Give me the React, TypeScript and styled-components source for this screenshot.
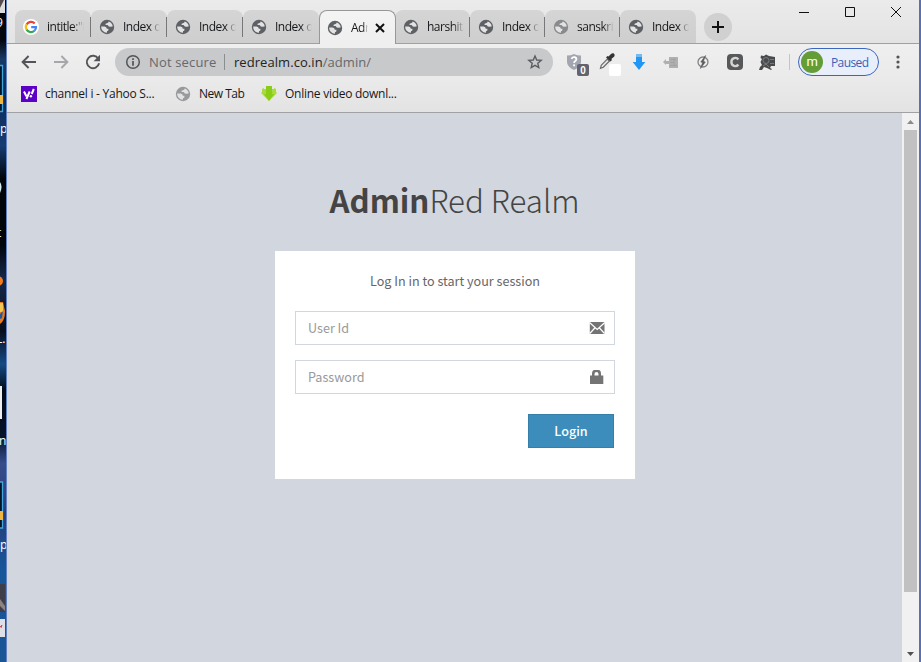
import React from 'react';
import styled, { createGlobalStyle } from 'styled-components';

const GlobalStyle = createGlobalStyle`
  * { box-sizing: border-box; }
  html, body { margin: 0; padding: 0; }
  body { overflow: hidden; font-family: "Open Sans", "Noto Sans", sans-serif; }
`;

const Screen = styled.div`
  display: flex;
  width: 921px;
  height: 662px;
  overflow: hidden;
  background: #0b2245;
`;

const Desktop = styled.aside`
  width: 6px;
  height: 662px;
  flex: none;
  overflow: hidden;
  svg { display: block; }
`;

const Window = styled.main`
  flex: 1;
  min-width: 0;
  display: flex;
  flex-direction: column;
  border-left: 1px solid #5f7fc0;
  border-right: 2px solid #5c6fae;
  background: #e5e5e5;
`;

const TitleBar = styled.header`
  display: flex;
  height: 44px;
  padding-left: 8px;
  background: linear-gradient(#ebebeb, #e3e3e3);
  box-shadow: inset 0 -1px #a0a0a2;
`;

const TabStrip = styled.nav`
  display: flex;
  margin-top: 10px;
  height: 34px;
  width: 681px;
`;

const Tab = styled.div<{ $active?: boolean; $narrow?: boolean; $divided?: boolean }>`
  display: flex;
  align-items: center;
  flex: none;
  width: ${p => (p.$active ? 77 : p.$narrow ? 75 : 76)}px;
  height: ${p => (p.$active ? 34 : 33)}px;
  margin-right: ${p => (p.$active ? -1 : 0)}px;
  padding-left: ${p => (p.$active ? 7 : 8)}px;
  border: ${p => (p.$active ? '1px solid #98989b' : '0')};
  border-bottom: 0;
  border-radius: 8px 8px 0 0;
  background: ${p => (p.$active ? 'linear-gradient(#f4f4f4, #efefef)' : 'linear-gradient(#d5d5d5, #cecece)')};
  z-index: ${p => (p.$active ? 1 : 0)};
  &::after {
    content: '';
    width: 1px;
    height: 20px;
    margin-left: auto;
    background: ${p => (p.$divided ? '#77777a' : 'transparent')};
  }
  svg { flex: none; }
`;

const TabTitle = styled.span<{ $short?: boolean }>`
  width: ${p => (p.$short ? 17 : 37)}px;
  margin-left: 8px;
  overflow: hidden;
  white-space: nowrap;
  font-size: 12px;
  line-height: 18px;
  letter-spacing: -0.5px;
  color: #17181a;
  mask-image: linear-gradient(90deg, #000 70%, transparent);
`;

const CloseMark = styled.svg`
  margin-left: 7px;
`;

const NewTab = styled.button`
  display: grid;
  place-items: center;
  width: 28px;
  height: 28px;
  margin: 13px 0 0 8px;
  padding: 0;
  border: 0;
  border-radius: 50%;
  background: #d0d0d0;
`;

const WindowControls = styled.div`
  display: grid;
  grid-template-columns: repeat(3, 46px);
  height: 24px;
  margin-left: auto;
  place-items: center;
`;

const Toolbar = styled.div`
  display: flex;
  align-items: center;
  height: 36px;
  padding-left: 6px;
  background: linear-gradient(#efefef, #eaeaea);
`;

const Slot = styled.div`
  display: grid;
  place-items: center;
  width: 32px;
  height: 32px;
  flex: none;
  svg { overflow: visible; }
`;

const MenuSlot = styled(Slot)`
  margin-left: 3px;
`;

const AddressBar = styled.div`
  display: flex;
  align-items: center;
  width: 438px;
  height: 28px;
  margin: 0 6px;
  padding: 0 10px;
  border-radius: 14px;
  background: #c8c9cb;
  font-size: 13px;
  line-height: 20px;
  color: #66686c;
  white-space: nowrap;
`;

const Security = styled.span`
  width: 75px;
  margin-left: 8px;
  letter-spacing: 0.15px;
`;

const AddressDivider = styled.i`
  width: 1px;
  height: 16px;
  margin-right: 9px;
  background: #8c8d90;
`;

const Address = styled.span`
  letter-spacing: 0.06px;
  b { font-weight: 400; color: #222326; }
`;

const StarIcon = styled.svg`
  margin-left: auto;
`;

const ToolbarDivider = styled.i`
  width: 1px;
  height: 16px;
  margin: 0 8px 0 6px;
  background: #bfc5d2;
`;

const Profile = styled.div`
  display: flex;
  align-items: center;
  width: 81px;
  height: 28px;
  padding-left: 2px;
  border: 1px solid #3a66bd;
  border-radius: 14px;
  background: #e9effa;
  color: #3561ba;
  font-size: 12px;
  letter-spacing: -0.6px;
`;

const Avatar = styled.span`
  display: grid;
  place-items: center;
  width: 22px;
  height: 22px;
  margin-right: 8px;
  border-radius: 50%;
  background: #649d35;
  color: #fff;
  font: 13px/20px Roboto, sans-serif;
`;

const Bookmarks = styled.div`
  display: flex;
  align-items: center;
  height: 33px;
  padding: 0 0 5px 14px;
  background: linear-gradient(#eaeaea, #e3e3e3);
  border-bottom: 1px solid #a0a1a5;
`;

const Bookmark = styled.div<{ $width: number; $spacing: number }>`
  display: flex;
  align-items: center;
  width: ${p => p.$width}px;
  gap: 8px;
  font-size: 12px;
  line-height: 18px;
  letter-spacing: ${p => p.$spacing}px;
  white-space: nowrap;
  color: #17181a;
`;

const Viewport = styled.div`
  display: flex;
  flex: 1;
  background: #d2d6de;
`;

const Page = styled.section`
  flex: 1;
  padding: 62px 0 0 268px;
  font-family: "Noto Sans CJK SC", sans-serif;
`;

const Brand = styled.h1`
  width: 359px;
  height: 50px;
  margin: 0 0 26px;
  text-align: center;
  font-size: 31.3px;
  line-height: 50px;
  font-weight: 300;
  white-space: nowrap;
  color: #444;
  b { font-weight: 700; }
`;

const LoginBox = styled.form`
  display: flex;
  flex-direction: column;
  width: 360px;
  height: 228px;
  padding: 20px;
  background: #fff;
`;

const Message = styled.p`
  height: 20px;
  margin: 0 0 20px;
  text-align: center;
  font-size: 12.6px;
  line-height: 20px;
  color: #666;
`;

const Field = styled.label`
  display: flex;
  align-items: center;
  height: 34px;
  margin-bottom: 15px;
  padding: 0 9px 0 12px;
  border: 1px solid #d2d6de;
`;

const Input = styled.input`
  flex: 1;
  min-width: 0;
  height: 20px;
  padding: 0;
  border: 0;
  outline: 0;
  font: 12.6px/20px "Noto Sans CJK SC", sans-serif;
  &::placeholder { color: #999; opacity: 1; }
`;

const LoginButton = styled.button`
  align-self: flex-end;
  width: 86px;
  height: 34px;
  margin: 5px 1px 0 0;
  padding: 0;
  border: 1px solid #367fa9;
  background: #3c8dbc;
  color: #fff;
  font: 500 12.6px/20px "Noto Sans CJK SC", sans-serif;
`;

const ScrollTrack = styled.div`
  display: flex;
  flex-direction: column;
  align-items: center;
  justify-content: space-between;
  width: 17px;
  background: #f1f1f1;
`;

const ScrollThumb = styled.div`
  width: 13px;
  height: 462px;
  margin-bottom: auto;
  background: #c1c1c1;
`;

const Arrow = styled.svg`
  display: block;
  flex: none;
`;

const Globe = ({ color = '#5d6064' }: { color?: string }) => (
  <svg width="16" height="16" viewBox="0 0 16 16">
    <circle cx="8" cy="8" r="7.2" fill={color} />
    <path d="M2.2 7.6H5.600Q7.800 7.800 7.800 9.800H9.400V11.300Q9.300 12 8 12.200V13.700C4.600 13.700 2 11 2.200 7.600Z" fill="#e2e2e2" />
    <path d="M9.700 2.400Q9.500 3.900 7.800 4.200 6.200 4.500 6.400 5.700 7.300 6.200 8.600 6.100 9.400 7.900 11 7.800L13.700 7.500C13.600 5 12.100 3.100 9.700 2.400Z" fill="#e2e2e2" />
  </svg>
);

const Google = () => (
  <svg width="16" height="16" viewBox="0 0 16 16">
    <circle cx="8" cy="8" r="8" fill="#fff" />
    <g fill="none" strokeWidth="2.2">
      <path d="M11.7 4.4A5.1 5.1 0 0 0 3.6 5.5" stroke="#ea4335" />
      <path d="M3.6 5.4A5.1 5.1 0 0 0 3.6 10.7" stroke="#fbbc05" />
      <path d="M3.6 10.6a5.1 5.1 0 0 0 7.8 1.2" stroke="#34a853" />
      <path d="M11.4 11.8c1.1-1 1.7-2.1 1.6-3.7H8.2" stroke="#4285f4" />
    </g>
  </svg>
);

const Back = ({ color, flip }: { color: string; flip?: boolean }) => (
  <svg width="16" height="16" viewBox="0 0 16 16" fill="none" stroke={color} strokeWidth="1.9">
    <path d={flip ? 'M1 8h13M8.4 2 14.4 8 8.4 14' : 'M15 8H2M7.6 2 1.6 8 7.6 14'} />
  </svg>
);

const tabs = [
  { title: 'intitle:"index', google: true, divided: true },
  { title: 'Index of /', divided: true },
  { title: 'Index of /', divided: true },
  { title: 'Index of /' },
  { title: 'Admin', active: true },
  { title: 'harshita', divided: true, narrow: true },
  { title: 'Index of /', divided: true, narrow: true },
  { title: 'sanskriti', divided: true, narrow: true, pale: true },
  { title: 'Index of /' },
];

const DesktopArt = () => (
  <svg width="6" height="662" viewBox="0 0 6 662">
    <defs>
      <linearGradient id="sky" x1="0" y1="0" x2="0" y2="1">
        <stop offset="0" stopColor="#03060c" />
        <stop offset=".06" stopColor="#03060c" />
        <stop offset=".09" stopColor="#183b66" />
        <stop offset=".15" stopColor="#0d2c5c" />
        <stop offset=".22" stopColor="#173c72" />
        <stop offset=".27" stopColor="#02050a" />
        <stop offset=".37" stopColor="#02050a" />
        <stop offset=".42" stopColor="#162849" />
        <stop offset=".5" stopColor="#080f1c" />
        <stop offset=".55" stopColor="#164a84" />
        <stop offset=".59" stopColor="#030b18" />
        <stop offset=".66" stopColor="#07152a" />
        <stop offset=".7" stopColor="#374d8b" />
        <stop offset=".78" stopColor="#263f7a" />
        <stop offset=".86" stopColor="#17569a" />
        <stop offset="1" stopColor="#1a5595" />
      </linearGradient>
    </defs>
    <rect width="6" height="662" fill="url(#sky)" />
    <path d="M0 0h5v13H0Z" fill="#ddd" />
    <path d="M0 0h4L0 8Z" fill="#554d50" />
    <g fill="#071426" stroke="#43a5db" strokeWidth="1.3">
      <path d="M-1 65.5h3.5v46H-1M-1 482h3.5v46H-1" />
    </g>
    <path d="M0 95h3v9H0ZM0 511h3v9H0Z" fill="#efb642" />
    <path d="M0 182q3 4 0 11Z" fill="#d4edf4" />
    <circle cx="-2" cy="281" r="5" fill="#f07b21" />
    <path d="M0 302h3l2 9q0 10-5 13Z" fill="#e87921" />
    <path d="M0 303h3v9H0Z" fill="#f2c655" />
    <path d="M0 314l3-3-1 7-2 1Z" fill="#235a91" />
    <path d="M0 386h2v33H0Z" fill="#eee" />
    <path d="M0 584h5v28H0Z" fill="#3d3e4a" />
    <path d="M0 599l5 7v5l-5-5Z" fill="#8d827d" />
    <path d="M0 619h5v18H0Z" fill="#dedfe7" />
    <path d="M0 627l2-2-1 3" fill="none" stroke="#c45158" />
    <g fill="#fff" fontFamily="Open Sans, sans-serif" fontSize="12">
      <text x="-4" y="27">9</text>
      <text x="0" y="133">p</text>
      <text x="-3" y="237">t</text>
      <text x="-4" y="343">L.</text>
      <text x="-1" y="445">n</text>
      <text x="0" y="549">p</text>
    </g>
  </svg>
);

export default function App() {
  return (
    <Screen>
      <GlobalStyle />
      <Desktop><DesktopArt /></Desktop>
      <Window>
        <TitleBar>
          <TabStrip>
            {tabs.map((t, i) => (
              <Tab key={i} $active={t.active} $narrow={t.narrow} $divided={t.divided}>
                {t.google ? <Google /> : <Globe color={t.pale ? '#898a8d' : undefined} />}
                <TabTitle $short={t.active}>{t.title}</TabTitle>
                {t.active && (
                  <CloseMark width="10" height="10" viewBox="0 0 10 10" stroke="#111" strokeWidth="2">
                    <path d="m1 1 8 8M9 1 1 9" />
                  </CloseMark>
                )}
              </Tab>
            ))}
          </TabStrip>
          <NewTab aria-label="New tab">
            <svg width="12" height="12" viewBox="0 0 12 12" stroke="#111" strokeWidth="2"><path d="M6 0v12M0 6h12" /></svg>
          </NewTab>
          <WindowControls>
            <svg width="12" height="12" stroke="#111"><path d="M1 6.5h10" /></svg>
            <svg width="12" height="12" fill="none" stroke="#111"><path d="M1.5 1.5h9v9h-9Z" /></svg>
            <svg width="12" height="12" stroke="#111"><path d="m1 1 10 10M11 1 1 11" /></svg>
          </WindowControls>
        </TitleBar>

        <Toolbar>
          <Slot><Back color="#525458" /></Slot>
          <Slot><Back color="#a6a7aa" flip /></Slot>
          <Slot>
            <svg width="16" height="16" viewBox="0 0 16 16">
              <path d="M13.3 4.7A6.2 6.2 0 1 0 14.1 9.3" fill="none" stroke="#525458" strokeWidth="1.9" />
              <path d="M15 .8v6.4H8.6Z" fill="#525458" />
            </svg>
          </Slot>
          <AddressBar>
            <svg width="16" height="16" viewBox="0 0 16 16" fill="none" stroke="#525458" strokeWidth="1.5">
              <circle cx="8" cy="8" r="6.3" /><path d="M8 7v4.7M8 4.3V6" strokeWidth="1.7" />
            </svg>
            <Security>Not secure</Security>
            <AddressDivider />
            <Address><b>redrealm.co.in</b>/admin/</Address>
            <StarIcon width="16" height="16" viewBox="0 0 16 16" fill="none" stroke="#5b5d61" strokeWidth="1.4">
              <path d="m8 2 1.7 4 4.5.4-3.4 2.9 1 4.3L8 11.3l-3.8 2.3 1-4.3-3.4-2.9L6.3 6Z" />
            </StarIcon>
          </AddressBar>
          <Slot>
            <svg width="24" height="24" viewBox="0 0 24 24">
              <path d="M4 5.5q4 0 7-1.5 3 1.5 7 1.5v6c0 4-3 6.500-7 8.500-4-2-7-4.500-7-8.500Z" fill="#a3a6b1" />
              <path d="M8.600 9c.6-3 5-2.200 4.800.300-.1 1.800-2.300 1.600-2.300 3.600" fill="none" stroke="#fff" strokeWidth="1.8" />
              <circle cx="11.1" cy="15.3" r="1.1" fill="#fff" />
              <rect x="14" y="14" width="12" height="12" rx="2" fill="#62636f" />
              <text x="17.2" y="23.6" fontFamily="Liberation Sans, sans-serif" fontSize="10" fontWeight="700" fill="#fff">0</text>
            </svg>
          </Slot>
          <Slot>
            <svg width="26" height="26" viewBox="0 0 26 26">
              <path d="m6.500 19.200.8-3 6-6 2 2-6 6Z" fill="#e5e5e5" stroke="#68696b" strokeWidth="1.2" />
              <path d="m12 8.500 1.500-1.500 1 .5 2.500-2.500c2.200-2.200 4.900.4 3 2.700l-2.700 2.300.7 1L16.400 12.500Z" fill="#343436" />
              <rect x="15" y="15" width="12" height="12" rx="2" fill="#fff" />
            </svg>
          </Slot>
          <Slot>
            <svg width="16" height="18" viewBox="0 0 16 18">
              <path d="M5 4h6v5h3.300L8 17 1.700 9H5Z" fill="#2196f3" /><path d="M5 1h6v3H5Z" fill="#72bbf1" />
            </svg>
          </Slot>
          <Slot>
            <svg width="16" height="16" viewBox="0 0 16 16" fill="#b0b0b0">
              <path d="M6 3h9v11H6v-4H3v1L0 8l3-3v2h3Z" /><path d="M7 5.500h6M7 8.500h4M7 11.500h7M11 4v8" stroke="#a2a2a2" />
            </svg>
          </Slot>
          <Slot>
            <svg width="14" height="14" viewBox="0 0 14 14">
              <circle cx="7" cy="7" r="5" fill="none" stroke="#818285" strokeWidth="1.3" />
              <path d="M9.600.5 4.800 7l1.900.5L4.400 13.500 9.300 7l-2-.500Z" fill="#56585a" stroke="#56585a" strokeWidth=".6" />
            </svg>
          </Slot>
          <Slot>
            <svg width="16" height="16" viewBox="0 0 16 16"><rect width="16" height="16" rx="4" fill="#57585a" /><path d="M11.3 5.5C9.3 2.5 4.4 4 4.4 8s4.9 5.5 6.9 2.5" fill="none" stroke="#d4d4d4" strokeWidth="2.4" /></svg>
          </Slot>
          <Slot>
            <svg width="17" height="17" viewBox="0 0 17 17">
              <path d="M2 1.500 5 2l2-1.500L10 2l6 1v9h-4l-1 2 2 1-1 1-4-2-3-1-2 3H0l1-3 2-2-1.500-3L3 5 1.500 4Z" fill="#484a4c" />
              <circle cx="7" cy="6.500" r="3" fill="none" stroke="#858688" strokeWidth=".8" />
              <path d="m4 12 3-2 3 3M11 5.500h4M11 9.500h4" stroke="#858688" strokeWidth=".8" fill="none" />
            </svg>
          </Slot>
          <ToolbarDivider />
          <Profile><Avatar>m</Avatar>Paused</Profile>
          <MenuSlot>
            <svg width="4" height="16" viewBox="0 0 4 16" fill="#525458"><circle cx="2" cy="3" r="1.6" /><circle cx="2" cy="8" r="1.6" /><circle cx="2" cy="13" r="1.6" /></svg>
          </MenuSlot>
        </Toolbar>

        <Bookmarks>
          <Bookmark $width={154} $spacing={-0.25}>
            <svg width="16" height="16" viewBox="0 0 16 16"><path d="M0 0h16v16H0Z" fill="#5b00c7" /><path d="m3 5.500 2.400 4.700M8.700 5.500 5.400 13" fill="none" stroke="#fff" strokeWidth="2" /><path d="M12.800 3 10.700 8" stroke="#fff" strokeWidth="2" /><circle cx="9.900" cy="10.200" r="1.200" fill="#fff" /></svg>
            channel i - Yahoo S...
          </Bookmark>
          <Bookmark $width={86} $spacing={-0.5}><Globe color="#97999c" />New Tab</Bookmark>
          <Bookmark $width={150} $spacing={-0.26}>
            <svg width="16" height="17" viewBox="0 0 16 17"><path d="M5 1h6v3h2V3l2 1v3l1 1-8 8-8-8 1-1V4l2-1v1h2Z" fill="#a7dc3b" /><path d="M5 1h6v8h2L8 16 3 9h2Z" fill="#8acd16" /></svg>
            Online video downl...
          </Bookmark>
        </Bookmarks>

        <Viewport>
          <Page>
            <Brand><b>Admin</b>Red Realm</Brand>
            <LoginBox onSubmit={e => e.preventDefault()}>
              <Message>Log In in to start your session</Message>
              <Field>
                <Input placeholder="User Id" />
                <svg width="16" height="14" viewBox="0 0 16 14"><path d="M.8 1h14.7v12H.8Z" fill="#747474" /><path d="m.5 1.500 7.700 7 7.600-7M.8 12.500l5-5.500M15.500 12.500l-5-5.500" fill="none" stroke="#fff" strokeWidth="1.2" /></svg>
              </Field>
              <Field>
                <Input placeholder="Password" />
                <svg width="16" height="16" viewBox="0 0 16 16"><path d="M1 6.500h2V5q0-4 2.500-4h4Q12 1 12 5v1.500h2.300V15H1ZM5.500 6.500h4V5q0-2-2-2t-2 2Z" fill="#747474" fillRule="evenodd" /></svg>
              </Field>
              <LoginButton>Login</LoginButton>
            </LoginBox>
          </Page>
          <ScrollTrack>
            <Arrow width="17" height="17"><path d="m5 11 3.500-4 3.500 4Z" fill="#8b8b8b" /></Arrow>
            <ScrollThumb />
            <Arrow width="17" height="17"><path d="m5 7 3.500 4L12 7Z" fill="#505050" /></Arrow>
          </ScrollTrack>
        </Viewport>
      </Window>
    </Screen>
  );
}
